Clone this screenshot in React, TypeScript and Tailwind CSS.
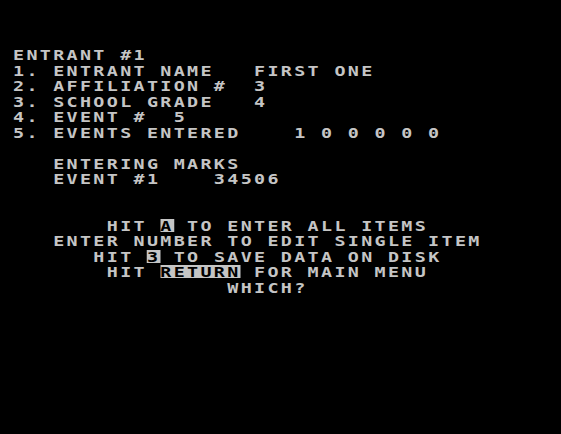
import React from "react";

type Seg = { t: string; inv?: boolean };

const rows: Seg[][] = [
  [{ t: "ENTRANT #1" }],
  [{ t: "1. ENTRANT NAME   FIRST ONE" }],
  [{ t: "2. AFFILIATION #  3" }],
  [{ t: "3. SCHOOL GRADE   4" }],
  [{ t: "4. EVENT #  5" }],
  [{ t: "5. EVENTS ENTERED    1 0 0 0 0 0" }],
  [{ t: "" }],
  [{ t: "   ENTERING MARKS" }],
  [{ t: "   EVENT #1    34506" }],
  [{ t: "" }],
  [{ t: "" }],
  [{ t: "       HIT " }, { t: "A", inv: true }, { t: " TO ENTER ALL ITEMS" }],
  [{ t: "   ENTER NUMBER TO EDIT SINGLE ITEM" }],
  [{ t: "      HIT " }, { t: "3", inv: true }, { t: " TO SAVE DATA ON DISK" }],
  [{ t: "       HIT " }, { t: "RETURN", inv: true }, { t: " FOR MAIN MENU" }],
  [{ t: "                WHICH?" }],
];

export default function App() {
  return (
    <div className="w-[561px] h-[434px] bg-black overflow-hidden pl-[13px] pt-[47px]">
      <div
        className="origin-top-left scale-x-125 text-[#c5c5c5] font-bold text-[14.7px] leading-[15.5px] tracking-[1.87px] whitespace-pre"
        style={{ fontFamily: '"DejaVu Sans Mono", "Liberation Mono", monospace' }}
      >
        {rows.map((row, i) => (
          <div key={i} className="h-[15.5px]">
            {row.map((s, j) =>
              s.inv ? (
                <span
                  key={j}
                  className="inline-block align-top mt-[1px] h-[13px] leading-[13px] bg-[#c5c5c5] text-black"
                >
                  {s.t}
                </span>
              ) : (
                <span key={j}>{s.t}</span>
              )
            )}
          </div>
        ))}
      </div>
    </div>
  );
}
